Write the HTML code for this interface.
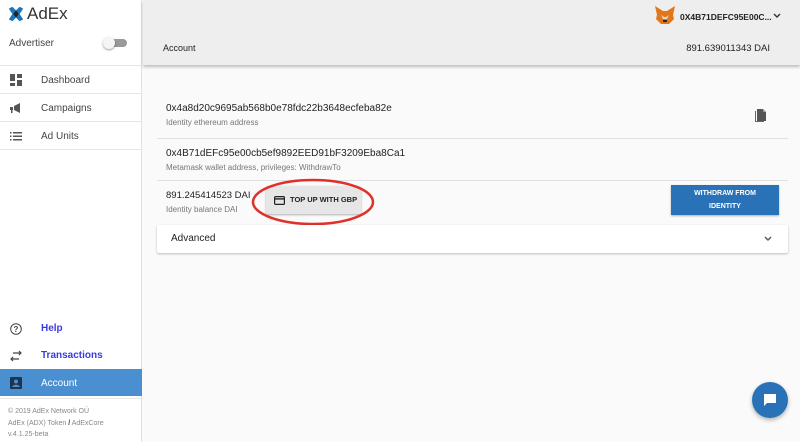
<!DOCTYPE html>
<html><head><meta charset="utf-8"><style>
*{box-sizing:border-box;margin:0;padding:0}
body{width:800px;height:442px;overflow:hidden;font-family:"Liberation Sans",sans-serif;background:#fafafa;position:relative;color:#222}
.side{position:absolute;left:0;top:0;width:142px;height:442px;background:#fff;border-right:1px solid #e0e0e0}
.logo{position:absolute;left:7px;top:4px;font-size:17px;color:#333;display:flex;align-items:center;gap:2px}
.adv{position:absolute;left:9px;top:38px;font-size:10px;color:#444}
.tog{position:absolute;left:105px;top:39px;width:22px;height:8px;border-radius:4px;background:#999}
.tog:after{content:"";position:absolute;left:-2px;top:-2px;width:12px;height:12px;border-radius:6px;background:#f5f5f5;box-shadow:0 1px 2px rgba(0,0,0,.4)}
.nav{position:absolute;left:0;width:142px;height:28px;border-top:1px solid #e6e6e6;font-size:10px;color:#444;line-height:27px;padding-left:41px}
.ic{position:absolute;left:10px;top:8px;width:12px;height:12px}
.bn{position:absolute;left:0;width:142px;height:28px;font-size:10px;line-height:28px;padding-left:41px;color:#3a3ae0;font-weight:bold}
.foot{position:absolute;left:8px;top:406px;font-size:7px;color:#888;line-height:11.5px}
.top{position:absolute;left:143px;top:0;width:657px;height:65px;background:#eee;box-shadow:0 2px 3px rgba(0,0,0,.25)}
.card{position:absolute;left:157px;width:631px}
.t1{font-size:10px;color:#222}
.t2{font-size:8px;color:#777;margin-top:4px}
.hr{position:absolute;left:157px;width:631px;height:1px;background:#e0e0e0}
</style></head><body>
<div class="side">
 <div class="logo"><svg width="18" height="18" viewBox="0 0 20 20"><path d="M2 4 L6 2 L10 6 L14 2 L18 4 L14 10 L18 16 L14 18 L10 14 L6 18 L2 16 L6 10Z" fill="#1b75bc"/><path d="M10 6 L13 10 L10 14 L7 10Z" fill="#222"/></svg><span>AdEx</span></div>
 <div class="adv">Advertiser</div><div class="tog"></div>
 <div class="nav" style="top:65px;padding-top:1px"><svg class="ic" viewBox="0 0 12 12"><rect x="0" y="0" width="5" height="7" fill="#555"/><rect x="7" y="0" width="5" height="4" fill="#555"/><rect x="0" y="9" width="5" height="3" fill="#555"/><rect x="7" y="6" width="5" height="6" fill="#555"/></svg>Dashboard</div>
 <div class="nav" style="top:93px;padding-top:1px"><svg class="ic" viewBox="0 0 12 12"><path d="M0 5h3v3H0zM4 4l6-3v10L4 8z" fill="#555"/><rect x="1" y="8" width="1.5" height="3" fill="#555"/></svg>Campaigns</div>
 <div class="nav" style="top:121px;border-bottom:1px solid #e6e6e6;height:29px;padding-top:1px"><svg class="ic" viewBox="0 0 12 12"><path d="M0 2h1.5v1.5H0zM3 2h9v1.5H3zM0 5.5h1.5V7H0zM3 5.5h9V7H3zM0 9h1.5v1.5H0zM3 9h9v1.5H3z" fill="#555"/></svg>Ad Units</div>
 <div class="bn" style="top:315px"><svg class="ic" viewBox="0 0 12 12"><circle cx="6" cy="6" r="5.3" fill="none" stroke="#444" stroke-width="1"/><text x="6" y="9" font-size="8" text-anchor="middle" fill="#444" font-family="Liberation Sans">?</text></svg>Help</div>
 <div class="bn" style="top:342px"><svg class="ic" viewBox="0 0 12 12"><path d="M3 3h8M9 1l2 2-2 2M9 9H1M3 7l-2 2 2 2" fill="none" stroke="#444" stroke-width="1.2"/></svg>Transactions</div>
 <div class="bn" style="top:369px;background:#4a8fd0;color:#fff;font-weight:normal;height:27px;padding-top:1px"><svg class="ic" viewBox="0 0 12 12"><rect x="0" y="0" width="12" height="12" rx="1" fill="#1d3550"/><circle cx="6" cy="4.5" r="2" fill="#4a8fd0"/><path d="M2 10c1-3 7-3 8 0z" fill="#4a8fd0"/></svg>Account</div>
 <div style="position:absolute;left:0;top:398px;width:142px;height:1px;background:#e6e6e6"></div>
 <div class="foot">© 2019 AdEx Network OÜ<br>AdEx (ADX) Token <b style="color:#444">/</b> AdExCore<br>v.4.1.25-beta</div>
</div>
<div class="top">
 <svg style="position:absolute;left:511px;top:5px" width="22" height="20" viewBox="0 0 22 20"><path d="M1 1l8 5h4l8-5-2 9 1 4-5 5H7l-5-5 1-4z" fill="#e2761b"/><path d="M7 10l2 4h4l2-4-3 2h-2z" fill="#f6d3b3"/><rect x="9" y="15" width="4" height="2" fill="#2a2a2a"/></svg>
 <div style="position:absolute;left:537px;top:12px;font-size:8.5px;font-weight:bold;color:#222">0X4B71DEFC95E00C...</div>
 <svg style="position:absolute;left:630px;top:13px" width="8" height="6" viewBox="0 0 8 6"><path d="M1 1l3 3 3-3" fill="none" stroke="#333" stroke-width="1.4"/></svg>
 <div style="position:absolute;left:20px;top:43px;font-size:9px;color:#222">Account</div>
 <div style="position:absolute;right:30px;top:43px;font-size:9.5px;color:#222">891.639011343 DAI</div>
</div>
<div class="card" style="top:103px;padding-left:9px"><div class="t1">0x4a8d20c9695ab568b0e78fdc22b3648ecfeba82e</div><div class="t2">Identity ethereum address</div></div>
<svg style="position:absolute;left:754px;top:109px" width="13" height="14" viewBox="0 0 13 14"><path d="M1 2h1v10h8v1H1z" fill="#666"/><path d="M3 0h6l3 3v9H3z" fill="#555"/><path d="M9 0v3h3" fill="#999"/></svg>
<div class="hr" style="top:138px"></div>
<div class="card" style="top:148px;padding-left:9px"><div class="t1">0x4B71dEFc95e00cb5ef9892EED91bF3209Eba8Ca1</div><div class="t2">Metamask wallet address, privileges: WithdrawTo</div></div>
<div class="hr" style="top:180px"></div>
<div class="card" style="top:190px;padding-left:9px"><div class="t1" style="font-size:9.5px">891.245414523 DAI</div><div class="t2">Identity balance DAI</div></div>
<div style="position:absolute;left:266px;top:186px;width:95px;height:28px;background:#e6e6e6;border-radius:2px;box-shadow:0 1px 2px rgba(0,0,0,.3);font-size:7.5px;font-weight:bold;color:#222;line-height:28px;padding-left:24px">TOP UP WITH GBP<svg style="position:absolute;left:8px;top:10px" width="11" height="9" viewBox="0 0 11 9"><rect x=".6" y=".6" width="9.8" height="7.8" rx="1" fill="none" stroke="#222" stroke-width="1.2"/><rect x="1" y="2.2" width="9" height="1.4" fill="#222"/></svg></div>
<svg style="position:absolute;left:250px;top:178px" width="126" height="50" viewBox="0 0 126 50"><ellipse cx="63" cy="24" rx="60" ry="22" fill="none" stroke="#e0302a" stroke-width="2.5"/></svg>
<div style="position:absolute;left:671px;top:185px;width:108px;height:30px;background:#2a72b8;box-shadow:0 1px 2px rgba(0,0,0,.3);color:#fff;font-size:7px;font-weight:bold;display:flex;align-items:center;justify-content:center;text-align:center;line-height:13px">WITHDRAW FROM<br>IDENTITY</div>
<div style="position:absolute;left:157px;top:225px;width:631px;height:28px;background:#fff;box-shadow:0 1px 2px rgba(0,0,0,.25);border-radius:2px;font-size:10px;color:#222;line-height:28px;padding-left:14px">Advanced<svg style="position:absolute;right:16px;top:11px" width="8" height="6" viewBox="0 0 8 6"><path d="M1 1l3 3 3-3" fill="none" stroke="#555" stroke-width="1.4"/></svg></div>
<div style="position:absolute;left:752px;top:382px;width:36px;height:36px;border-radius:18px;background:#2a72b8;box-shadow:0 2px 4px rgba(0,0,0,.3)"><svg style="position:absolute;left:11px;top:11px" width="14" height="14" viewBox="0 0 14 14"><path d="M1 1h12v9H4l-3 3z" fill="#fff"/></svg></div>
</body></html>
